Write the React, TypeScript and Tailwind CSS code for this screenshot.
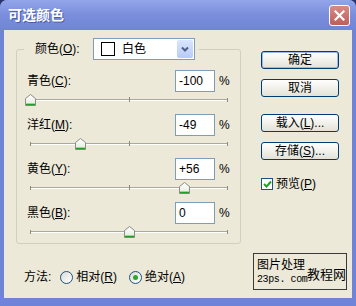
import React from "react";

const FONT = "font-['Liberation_Sans','Noto_Sans_CJK_SC',sans-serif]";

const rows = [
  { label: "青色", key: "C", value: "-100", v: -100 },
  { label: "洋红", key: "M", value: "-49", v: -49 },
  { label: "黄色", key: "Y", value: "+56", v: 56 },
  { label: "黑色", key: "B", value: "0", v: 0 },
];

function Thumb() {
  return (
    <svg width="11" height="12" viewBox="0 0 11 12">
      <defs>
        <linearGradient id="tg" x1="0" y1="0" x2="0" y2="1">
          <stop offset="0" stopColor="#ffffff" />
          <stop offset="1" stopColor="#e8e8e0" />
        </linearGradient>
      </defs>
      <path d="M0.5 11.5 L0.5 4.5 L5.5 0.5 L10.5 4.5 L10.5 11.5 Z" fill="url(#tg)" stroke="#8d8d86" />
      <path d="M1 10.5 L10 10.5" stroke="#21a121" strokeWidth="1.5" />
      <path d="M1.5 9.5 L9.5 9.5" stroke="#8fdc8f" strokeWidth="1" />
    </svg>
  );
}

function Slider({ v }: { v: number }) {
  const left = ((v + 100) / 200) * 198 - 5.5;
  return (
    <div className="relative ml-[13px] h-[22px] w-[198px]">
      <div className="absolute left-0 top-[7px] h-[1px] w-full bg-[#a9a99f]" />
      <div className="absolute left-0 top-[8px] h-[1px] w-full bg-white" />
      <div className="absolute left-0 top-[6px] h-[4px] w-[1px] bg-[#8a8a80]" />
      <div className="absolute left-[99px] top-[5px] h-[5px] w-[1px] bg-[#8a8a80]" />
      <div className="absolute right-0 top-[6px] h-[4px] w-[1px] bg-[#8a8a80]" />
      <div className="absolute top-[2px]" style={{ left }}>
        <Thumb />
      </div>
    </div>
  );
}

function Btn({ children, def }: { children: React.ReactNode; def?: boolean }) {
  return (
    <div
      className={
        "ml-[8px] flex h-[18px] w-[78px] items-center justify-center rounded-[3px] border border-[#003c74] bg-linear-to-b from-white to-[#e4e2d6] text-[12px] leading-none text-black " +
        (def ? "shadow-[inset_0_0_0_1px_#9cb8ec]" : "")
      }
    >
      {children}
    </div>
  );
}

function Radio({ checked }: { checked?: boolean }) {
  return (
    <div className="flex h-[13px] w-[13px] items-center justify-center rounded-full border border-[#1c5180] bg-linear-to-br from-[#dcdcd6] to-white">
      {checked && <div className="h-[5px] w-[5px] rounded-full bg-[#2ba72b]" />}
    </div>
  );
}

export default function App() {
  return (
    <div className={"h-[306px] w-[356px] overflow-hidden bg-[#27336a] " + FONT}>
      <div className="flex h-full flex-col rounded-t-[7px] bg-[#6f84d6] px-[4px] pb-[8px]">
        {/* Title bar */}
        <div className="-mx-[4px] flex h-[30px] items-center justify-between rounded-t-[7px] bg-linear-to-b from-[#93a5ea] via-[#7a8edc] to-[#7185d7] pl-[8px] pr-[6px]">
          <span className="text-[14px] font-bold leading-none text-white [text-shadow:1px_1px_0_#4a5ca8]">可选颜色</span>
          <div className="flex h-[21px] w-[21px] items-center justify-center rounded-[3px] border border-white bg-linear-to-b from-[#d98a86] to-[#bd5f5b]">
            <svg width="11" height="11" viewBox="0 0 11 11">
              <path d="M1.5 1.5 L9.5 9.5 M9.5 1.5 L1.5 9.5" stroke="white" strokeWidth="2.2" strokeLinecap="square" />
            </svg>
          </div>
        </div>

        {/* Body */}
        <div className="flex flex-1 bg-[#ece9d8] text-[12px] text-black">
          {/* Left column */}
          <div className="flex w-[249px] shrink-0 flex-col pl-[12px] pt-[8px]">
            <fieldset className="h-[206px] w-[225px] rounded-[3px] border border-[#d0d0bf] p-0">
              <legend className="ml-[7px] pl-[11px] pr-[4px]">
                <div className="flex h-[22px] items-center">
                  <span className="w-[58px] whitespace-nowrap leading-none">
                    颜色(<span className="underline">O</span>):
                  </span>
                  <div className="flex h-[22px] w-[102px] items-center border border-[#7f9db9] bg-white">
                    <div className="ml-[7px] h-[14px] w-[14px] border border-black bg-white" />
                    <span className="ml-[7px] flex-1 leading-none">白色</span>
                    <div className="mr-[1px] flex h-[18px] w-[16px] items-center justify-center rounded-[2px] bg-linear-to-b from-[#dbe5fd] to-[#b8caf5]">
                      <svg width="8" height="6" viewBox="0 0 8 6">
                        <path d="M1 1.5 L4 4.5 L7 1.5" fill="none" stroke="#4d6185" strokeWidth="2" />
                      </svg>
                    </div>
                  </div>
                </div>
              </legend>
              <div className="pt-[10px]">
                {rows.map((r) => (
                  <div key={r.key} className="h-[44px]">
                    <div className="flex h-[22px] items-center">
                      <span className="w-[158px] pl-[10px] leading-none">
                        {r.label}(<span className="underline">{r.key}</span>):
                      </span>
                      <div className="flex h-[22px] w-[40px] items-center border border-[#7f9db9] bg-white pl-[3px] leading-none">
                        {r.value}
                      </div>
                      <span className="ml-[4px] leading-none">%</span>
                    </div>
                    <Slider v={r.v} />
                  </div>
                ))}
              </div>
            </fieldset>

            <div className="mt-[25px] flex h-[16px] items-center whitespace-nowrap pl-[8px] leading-none">
              <span>方法:</span>
              <div className="ml-[9px]">
                <Radio />
              </div>
              <span className="ml-[3px]">
                相对(<span className="underline">R</span>)
              </span>
              <div className="ml-[12px]">
                <Radio checked />
              </div>
              <span className="ml-[3px]">
                绝对(<span className="underline">A</span>)
              </span>
            </div>
          </div>

          {/* Right column */}
          <div className="flex flex-1 flex-col pt-[21px]">
            <Btn def>确定</Btn>
            <div className="mt-[10px]">
              <Btn>取消</Btn>
            </div>
            <div className="mt-[17px]">
              <Btn>
                载入(<span className="underline">L</span>)...
              </Btn>
            </div>
            <div className="mt-[10px]">
              <Btn>
                存储(<span className="underline">S</span>)...
              </Btn>
            </div>
            <div className="ml-[8px] mt-[17px] flex h-[13px] items-center whitespace-nowrap leading-none">
              <div className="flex h-[12px] w-[12px] items-center justify-center border border-[#1c5180] bg-white">
                <svg width="9" height="8" viewBox="0 0 9 8">
                  <path d="M1 4 L3.5 6.5 L8 1.5" fill="none" stroke="#21a121" strokeWidth="2" />
                </svg>
              </div>
              <span className="ml-[3px]">
                预览(<span className="underline">P</span>)
              </span>
            </div>

            <div className="mt-[63px] flex h-[37px] w-[94px] items-center whitespace-nowrap border border-[#3a3a3a] pl-[3px]">
              <div className="flex w-[50px] shrink-0 flex-col">
                <span className="text-[12px] leading-[16px]">图片处理</span>
                <span className="font-['Liberation_Mono',monospace] text-[10px] leading-[14px] tracking-[-0.4px]">23ps. com</span>
              </div>
              <span className="mt-[6px] shrink-0 text-[13px] leading-none">教程网</span>
            </div>
          </div>
        </div>
      </div>
    </div>
  );
}
